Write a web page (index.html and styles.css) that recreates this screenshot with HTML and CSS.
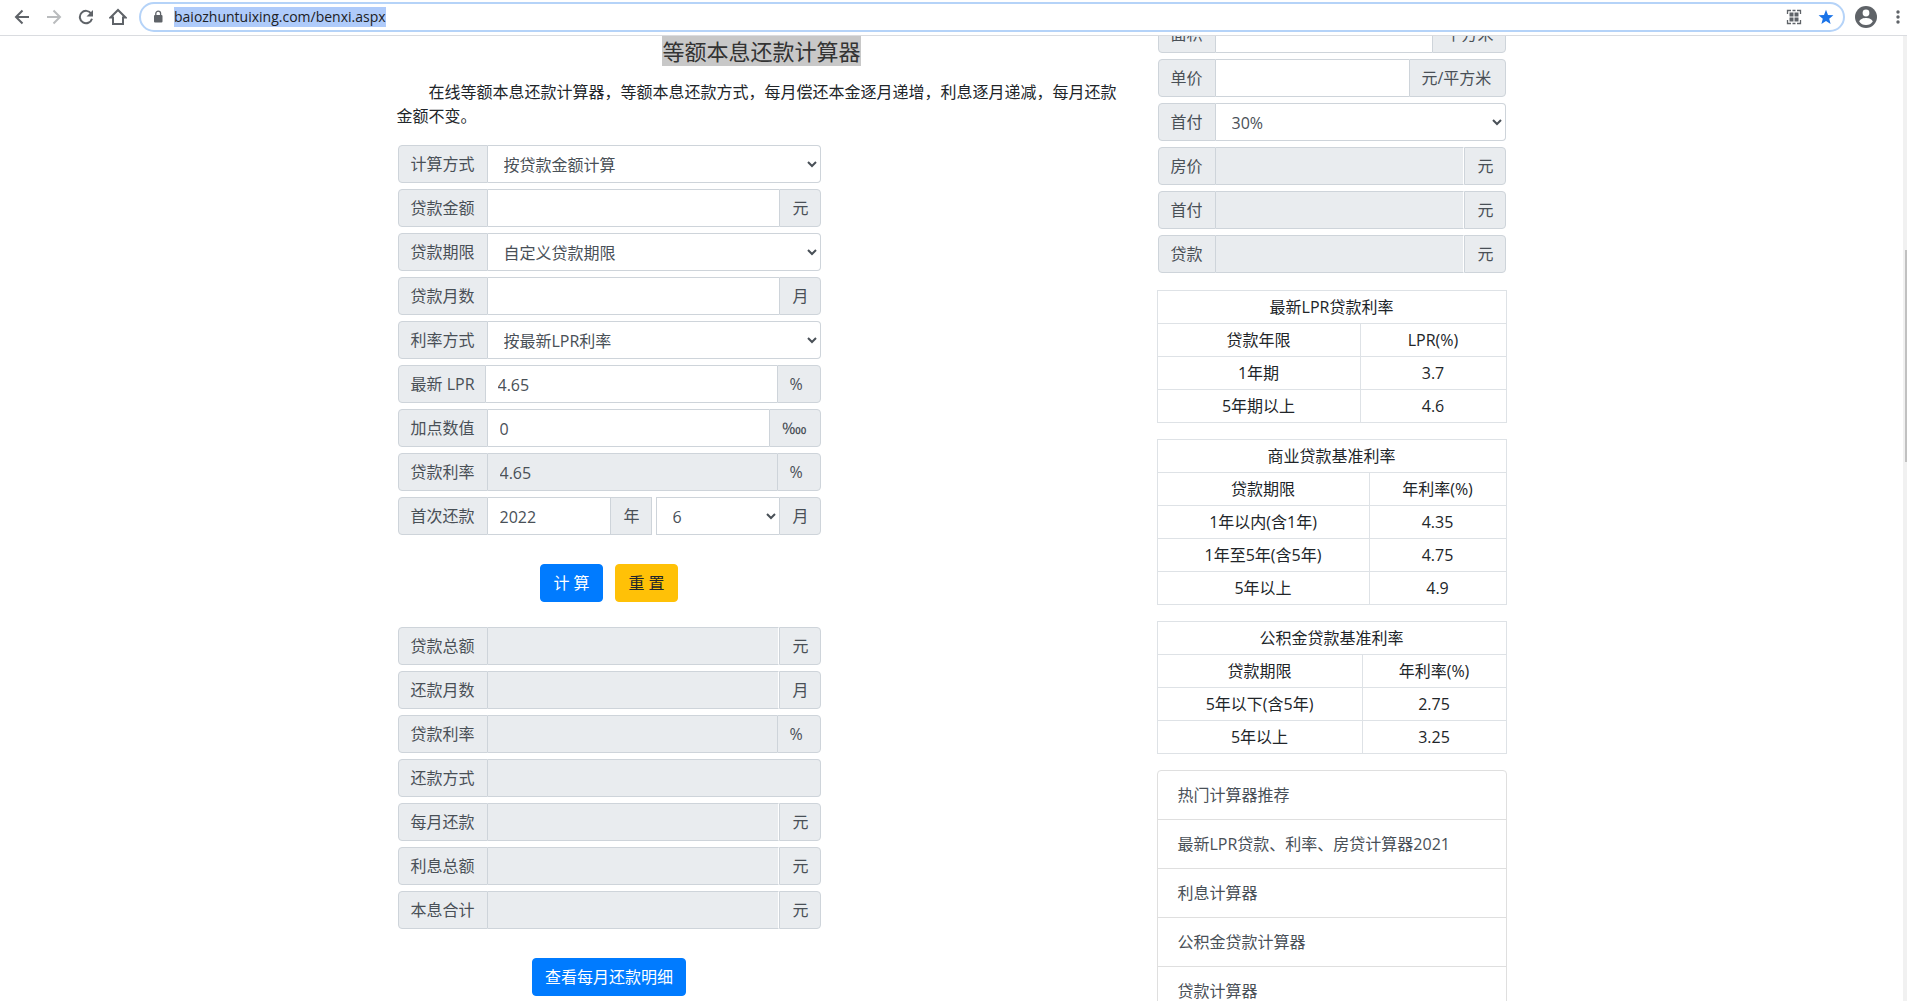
FILE: index.html
```html
<!DOCTYPE html>
<html lang="zh-CN">
<head>
<meta charset="utf-8">
<title>等额本息还款计算器</title>
<link rel="stylesheet" href="styles.css">
</head>
<body>
<header class="toolbar">
  <button class="tool" type="button" aria-label="后退"><svg width="16" height="16" viewBox="0 0 16 16" fill="none" stroke="#5f6368" stroke-width="2"><path d="M15 8H2.500M8.500 1.500L2 8l6.500 6.500"/></svg></button>
  <button class="tool" type="button" aria-label="前进"><svg width="16" height="16" viewBox="0 0 16 16" fill="none" stroke="#babcbe" stroke-width="2"><path d="M1 8h12.500M7.500 1.500L14 8l-6.500 6.500"/></svg></button>
  <button class="tool" type="button" aria-label="刷新"><svg width="16" height="16" viewBox="0 0 16 16"><path d="M13.200 4.600A6.200 6.200 0 1 0 14 9.800" fill="none" stroke="#5f6368" stroke-width="2"/><path d="M15 1v6.500H8.500z" fill="#5f6368"/></svg></button>
  <button class="tool" type="button" aria-label="主页"><svg width="18" height="18" viewBox="0 0 18 18" fill="none" stroke="#5f6368" stroke-width="2"><path d="M1.500 9.500H4V16h10V9.500h2.500L9 2z"/></svg></button>
  <div class="address">
    <svg width="10" height="14" viewBox="0 0 10 14"><rect x="1" y="5" width="8.500" height="7.500" rx="1" fill="#5f6368"/><path d="M2.800 5.500V3.600a2.400 2.400 0 0 1 4.800 0v1.900" fill="none" stroke="#5f6368" stroke-width="1.300"/></svg>
    <span class="url"><mark class="url-text">baiozhuntuixing.com/benxi.aspx</mark></span>
    <button class="tool" type="button" aria-label="二维码"><svg width="16" height="16" viewBox="0 0 16 16"><path d="M1.500 5V1.500H5M6.500 1.500h3M11 1.500h3.500V5M14.500 11v3.500H11M9.500 14.500h-3M5 14.500H1.500V11" fill="none" stroke="#5f6368" stroke-width="1.300"/><path d="M3.500 3.500h4v4h-4zM8.500 3.500h4v4h-4zM3.500 8.500h4v4h-4zM8.500 8.500h4v4h-4z" fill="#5f6368"/></svg></button>
    <button class="tool" type="button" aria-label="收藏"><svg width="16" height="16" viewBox="0 0 16 16"><path d="M8 .8l2 5.100 5.400.3-4.200 3.500 1.400 5.300L8 12l-4.600 3 1.400-5.300L.6 6.200 6 5.900z" fill="#1a73e8"/></svg></button>
  </div>
  <button class="tool" type="button" aria-label="用户"><svg width="22" height="22" viewBox="0 0 22 22"><circle cx="11" cy="11" r="11" fill="#5f6368"/><circle cx="11" cy="7" r="3.400" fill="#fff"/><path d="M4.200 15.500c1.200-3 4.200-3.600 6.800-3.600s5.600.6 6.800 3.600A8 8 0 0 1 11 19a8 8 0 0 1-6.800-3.500z" fill="#fff"/></svg></button>
  <button class="tool tool-menu" type="button" aria-label="菜单"><svg width="4" height="14" viewBox="0 0 4 14" fill="#5f6368"><circle cx="2" cy="2" r="1.700"/><circle cx="2" cy="7" r="1.700"/><circle cx="2" cy="12" r="1.700"/></svg></button>
</header>

<div class="viewport">
  <div class="page">
    <div class="container">
      <main class="main">
        <h1 class="title"><mark class="title-text">等额本息还款计算器</mark></h1>
        <p class="intro">在线等额本息还款计算器，等额本息还款方式，每月偿还本金逐月递增，利息逐月递减，每月还款金额不变。</p>
        <form class="calc">
          <div class="fields">
            <div class="field"><label class="tag" for="mode">计算方式</label><select class="control" id="mode"><option>按贷款金额计算</option></select></div>
            <div class="field"><label class="tag" for="amount">贷款金额</label><input class="control" id="amount" type="text"><span class="unit">元</span></div>
            <div class="field"><label class="tag" for="term">贷款期限</label><select class="control" id="term"><option>自定义贷款期限</option></select></div>
            <div class="field"><label class="tag" for="months">贷款月数</label><input class="control" id="months" type="text"><span class="unit">月</span></div>
            <div class="field"><label class="tag" for="ratemode">利率方式</label><select class="control" id="ratemode"><option>按最新LPR利率</option></select></div>
            <div class="field"><label class="tag tag-lpr" for="lpr">最新 LPR</label><input class="control" id="lpr" type="text" value="4.65"><span class="unit unit-percent">%</span></div>
            <div class="field"><label class="tag" for="points">加点数值</label><input class="control" id="points" type="text" value="0"><span class="unit unit-points">‱</span></div>
            <div class="field"><label class="tag" for="rate">贷款利率</label><input class="control" id="rate" type="text" value="4.65" readonly><span class="unit unit-percent">%</span></div>
            <div class="field field-date">
              <div class="part part-year"><label class="tag" for="year">首次还款</label><input class="control" id="year" type="text" value="2022"><span class="unit">年</span></div>
              <div class="part part-month"><select class="control" id="month" aria-label="首次还款月份"><option>6</option></select><span class="unit">月</span></div>
            </div>
          </div>
          <div class="actions">
            <button class="btn btn-primary" type="button">计 算</button>
            <button class="btn btn-warning" type="reset">重 置</button>
          </div>
          <div class="fields">
            <div class="field"><label class="tag" for="r1">贷款总额</label><input class="control seam" id="r1" type="text" readonly><span class="unit">元</span></div>
            <div class="field"><label class="tag" for="r2">还款月数</label><input class="control seam" id="r2" type="text" readonly><span class="unit">月</span></div>
            <div class="field"><label class="tag" for="r3">贷款利率</label><input class="control" id="r3" type="text" readonly><span class="unit unit-percent">%</span></div>
            <div class="field"><label class="tag" for="r4">还款方式</label><input class="control" id="r4" type="text" readonly></div>
            <div class="field"><label class="tag" for="r5">每月还款</label><input class="control seam" id="r5" type="text" readonly><span class="unit">元</span></div>
            <div class="field"><label class="tag" for="r6">利息总额</label><input class="control seam" id="r6" type="text" readonly><span class="unit">元</span></div>
            <div class="field"><label class="tag" for="r7">本息合计</label><input class="control seam" id="r7" type="text" readonly><span class="unit">元</span></div>
          </div>
          <div class="actions">
            <button class="btn btn-primary" type="button">查看每月还款明细</button>
          </div>
        </form>
      </main>

      <aside class="side">
        <form class="fields house">
          <div class="field"><label class="tag" for="area">面积</label><input class="control" id="area" type="text"><span class="unit">平方米</span></div>
          <div class="field"><label class="tag" for="price">单价</label><input class="control" id="price" type="text"><span class="unit unit-price">元/平方米</span></div>
          <div class="field"><label class="tag" for="down">首付</label><select class="control" id="down"><option>30%</option></select></div>
          <div class="field"><label class="tag" for="h1">房价</label><input class="control seam" id="h1" type="text" readonly><span class="unit">元</span></div>
          <div class="field"><label class="tag" for="h2">首付</label><input class="control seam" id="h2" type="text" readonly><span class="unit">元</span></div>
          <div class="field"><label class="tag" for="h3">贷款</label><input class="control seam" id="h3" type="text" readonly><span class="unit">元</span></div>
        </form>
        <table class="rates">
          <colgroup><col class="col-lpr"><col></colgroup>
          <tr><th colspan="2">最新LPR贷款利率</th></tr>
          <tr><th>贷款年限</th><th>LPR(%)</th></tr>
          <tr><td>1年期</td><td>3.7</td></tr>
          <tr><td>5年期以上</td><td>4.6</td></tr>
        </table>
        <table class="rates">
          <colgroup><col class="col-bank"><col></colgroup>
          <tr><th colspan="2">商业贷款基准利率</th></tr>
          <tr><th>贷款期限</th><th>年利率(%)</th></tr>
          <tr><td>1年以内(含1年)</td><td>4.35</td></tr>
          <tr><td>1年至5年(含5年)</td><td>4.75</td></tr>
          <tr><td>5年以上</td><td>4.9</td></tr>
        </table>
        <table class="rates">
          <colgroup><col class="col-fund"><col></colgroup>
          <tr><th colspan="2">公积金贷款基准利率</th></tr>
          <tr><th>贷款期限</th><th>年利率(%)</th></tr>
          <tr><td>5年以下(含5年)</td><td>2.75</td></tr>
          <tr><td>5年以上</td><td>3.25</td></tr>
        </table>
        <nav class="links">
          <a class="link" href="#hot">热门计算器推荐</a>
          <a class="link" href="#lpr">最新LPR贷款、利率、房贷计算器2021</a>
          <a class="link" href="#interest">利息计算器</a>
          <a class="link" href="#fund">公积金贷款计算器</a>
          <a class="link" href="#loan">贷款计算器</a>
        </nav>
      </aside>
    </div>
  </div>
  <div class="scrollbar"><div class="thumb"></div></div>
</div>
</body>
</html>
```
FILE: styles.css
```css
* { box-sizing: border-box; }

body {
  margin: 0;
  height: 100vh;
  display: flex;
  flex-direction: column;
  overflow: hidden;
  background: #fff;
  color: #212529;
  font: 16px/24px "Open Sans", "Noto Sans CJK SC", sans-serif;
}

/* Browser toolbar */
.toolbar {
  flex: none;
  display: flex;
  align-items: center;
  height: 36px;
  padding: 0 0 2px 6px;
  border-bottom: 1px solid #dadce0;
}
.tool {
  flex: none;
  display: flex;
  align-items: center;
  justify-content: center;
  width: 32px;
  height: 28px;
  padding: 0;
  border: 0;
  background: none;
}
.tool-menu {
  width: 25px;
  padding-left: 7px;
}
.address {
  flex: 1;
  display: flex;
  align-items: center;
  height: 30px;
  margin: 0 5px;
  padding: 0 1px 0 12px;
  border: 2px solid #b5d3f8;
  border-radius: 15px;
}
.url {
  flex: 1;
  margin-left: 11px;
  font-size: 14px;
  line-height: 20px;
}
.url-text {
  display: inline-block;
  background: #afcbfa;
  color: #202124;
}

/* Scrolled page area */
.viewport {
  flex: 1;
  min-height: 0;
  display: flex;
}
.page {
  flex: 1;
  overflow: hidden;
}
.container {
  display: flex;
  gap: 30px;
  max-width: 1140px;
  margin: 0 auto;
  padding: 0 15px;
}
.main { flex: 1; }
.side {
  flex: none;
  width: 350px;
  margin-top: -21px;
}
.scrollbar {
  flex: none;
  display: grid;
  grid-template-rows: 214fr 212fr 539fr;
  width: 4px;
  padding-left: 2px;
  background: #f1f1f1;
}
.thumb {
  grid-row: 2;
  background: #c1c1c1;
}

.title {
  margin: 0 0 14px;
  font-size: 22px;
  font-weight: 400;
  line-height: 30px;
  text-align: center;
}
.title-text {
  display: inline-block;
  background: #c8c8c8;
  color: #333;
}
.intro {
  margin: 0 0 17px;
  text-indent: 32px;
}

/* Input groups */
.calc {
  width: 423px;
  margin-left: 1px;
}
.fields {
  display: flex;
  flex-direction: column;
  gap: 6px;
}
.field, .part {
  display: flex;
  height: 38px;
}
.field-date { gap: 4px; }
.part-year { width: 254px; }
.part-month { flex: 1; }
.tag, .unit {
  flex: none;
  padding: 6px 12px;
  border: 1px solid #ced4da;
  background: #e9ecef;
  color: #495057;
  white-space: nowrap;
}
.tag { border-radius: 4px 0 0 4px; }
.tag-lpr { width: 88px; }
.unit {
  padding-right: 11px;
  border-radius: 0 4px 4px 0;
}
.part-year .unit { border-radius: 0; }
.unit-percent { width: 44px; }
.unit-points { width: 52px; }
.unit-price { width: 97px; }
.control {
  flex: 1;
  min-width: 0;
  height: 38px;
  margin: 0;
  padding: 7px 12px 5px;
  border: 1px solid #ced4da;
  border-left: 0;
  border-radius: 0;
  background: #fff;
  color: #495057;
  font: inherit;
}
.control:not(:last-child) { border-right: 0; }
.control:last-child { border-radius: 0 4px 4px 0; }
.part-month .control { border-left: 1px solid #ced4da; }
.control:read-only:not(select) { background: #e9ecef; }
.control.seam { border-right: 1px solid #fff; }

.actions {
  display: flex;
  justify-content: center;
  gap: 12px;
  padding: 29px 0 25px;
}
.btn {
  min-width: 63px;
  height: 38px;
  padding: 6px 12px;
  border: 1px solid;
  border-radius: 4px;
  font: inherit;
}
.btn-primary {
  border-color: #007bff;
  background: #007bff;
  color: #fff;
}
.btn-warning {
  border-color: #ffc107;
  background: #ffc107;
  color: #212529;
}

/* Sidebar */
.house { margin: 0 1px 17px; }
.rates {
  width: 100%;
  margin-bottom: 16px;
  border-collapse: collapse;
  table-layout: fixed;
  text-align: center;
}
.rates th, .rates td {
  padding: 4px;
  border: 1px solid #dee2e6;
  font-weight: 400;
}
.col-lpr { width: 203px; }
.col-bank { width: 212px; }
.col-fund { width: 205px; }
.links {
  border: 1px solid #dfdfdf;
  border-radius: 4px;
}
.link {
  display: block;
  padding: 12px 20px;
  border-bottom: 1px solid #dfdfdf;
  color: #495057;
  text-decoration: none;
}
```
